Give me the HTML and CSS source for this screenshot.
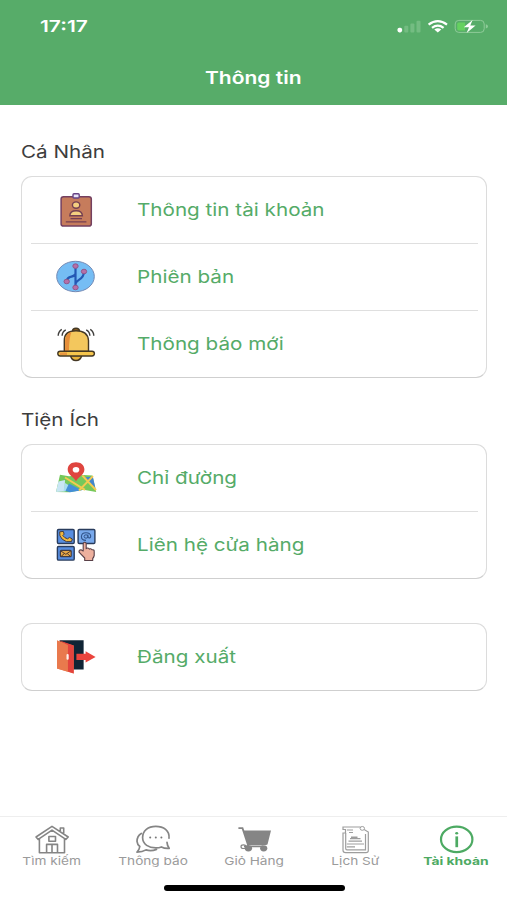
FILE: index.html
```html
<!DOCTYPE html>
<html lang="vi">
<head>
<meta charset="utf-8">
<meta name="viewport" content="width=device-width, initial-scale=1">
<title>Thông tin</title>
<link rel="stylesheet" href="styles.css">
</head>
<body>
<div class="app">
  <header class="header">
    <div class="status">
      <span class="time wide">17:17</span>
      <svg class="status-icons" viewBox="394 14 98 26" width="98" height="26">
        <rect x="397.5" y="27.8" width="4.6" height="4.6" rx="1.8" fill="#fff"/>
        <g fill="#74bc82"><rect x="404.3" y="25.8" width="4" height="6.6" rx="1"/><rect x="410.4" y="23.4" width="4" height="9" rx="1"/><rect x="416.5" y="20.8" width="4" height="11.6" rx="1"/></g>
        <g fill="none" stroke="#fff" stroke-width="2.3"><path d="M428.6 24.6Q437.8 17.6 447 24.6"/><path d="M432 27.8Q437.8 23.4 443.6 27.8"/></g>
        <path d="M434.3 29.5Q437.8 27 441.3 29.5L437.8 32.6Z" fill="#fff"/>
        <rect x="455.2" y="20.4" width="29" height="12" rx="3.6" fill="none" stroke="#8fcb99"/>
        <path d="M458.8 22.4H465V30.6H458.8Q457.2 30.6 457.2 28.8V24.2Q457.2 22.4 458.8 22.4Z" fill="#65d15f"/>
        <path d="M485.8 24.2Q488 24.8 488 26.4T485.8 28.6Z" fill="#8fcb99"/>
        <path d="M472.6 20L463.8 27.2H469L466.6 33L475.6 25.4H470.3Z" fill="#fff"/>
      </svg>
    </div>
    <h1 class="title"><span class="wide">Thông tin</span></h1>
  </header>

  <main class="content">
    <h2 class="heading"><span class="wide">Cá Nhân</span></h2>
    <section class="card">
      <div class="row">
        <svg class="icon" viewBox="54 190 44 40">
          <rect x="61.1" y="196.7" width="30.2" height="29.4" rx="2.4" fill="#c67c5c" stroke="#744060" stroke-width="1.5"/>
          <rect x="73" y="193.8" width="6.2" height="4.2" rx="1" fill="#e9e4f8" stroke="#674384" stroke-width="1.4"/>
          <g fill="#f4cf80" stroke="#744052" stroke-width="1.4"><ellipse cx="76.1" cy="205.1" rx="3.7" ry="3.2"/><path d="M69.8 215.7Q70 210.7 76.1 210.7T82.4 215.7Z"/></g>
          <path d="M70.5 218.6H82M65.8 221.9H86.4" stroke="#743e52" stroke-width="1.3"/>
        </svg>
        <span class="label wide">Thông tin tài khoản</span>
      </div>
      <div class="row">
        <svg class="icon" viewBox="54 256.5 44 40">
          <ellipse cx="75.5" cy="276" rx="18.8" ry="15.2" fill="#75bdf4" stroke="#748ab5" stroke-width="1"/>
          <path d="M75.5 266V287M75.5 283.4C76 278.5 84 280 84 271M75.5 273.5C74 277.5 67 274.5 66.7 280.8" fill="none" stroke="#2458b4" stroke-width="2.2"/>
          <g fill="#b56fa8" stroke="#8b5487" stroke-width=".9"><ellipse cx="75.5" cy="265.6" rx="2.7" ry="2.3"/><ellipse cx="84" cy="271" rx="2.7" ry="2.3"/><ellipse cx="66.7" cy="281" rx="2.7" ry="2.3"/><ellipse cx="75.5" cy="287" rx="2.7" ry="2.3"/></g>
        </svg>
        <span class="label wide">Phiên bản</span>
      </div>
      <div class="row">
        <svg class="icon" viewBox="54 323.5 44 40">
          <g stroke="#443824" stroke-width="1.4" stroke-linejoin="round"><path d="M70.5 355Q71.5 360 76 360T81.8 355Z" fill="#e8b33b"/><path d="M72.4 331Q72.5 327.7 76 327.7T79.6 331Z" fill="#8e5d20"/><path d="M64.3 351V340Q64.3 330.3 76 330.3T88.5 340V351Z" fill="#f3c75d"/></g>
          <path d="M65.1 350.4V340Q65.1 333 71.5 331.5Q69 337 69 350.4Z" fill="#e68e39"/>
          <rect x="57.8" y="350.7" width="36.6" height="4.8" rx="2.4" fill="#f6c64d" stroke="#443824" stroke-width="1.4"/>
          <path d="M60 352H67V354.5H60Z" fill="#e89742"/>
          <path d="M65.8 329.3Q62.4 331 62.1 335.2M61.8 328.8Q58.3 331 58.2 335.2M86.2 329.3Q89.6 331 89.9 335.2M90.2 328.8Q93.7 331 93.8 335.2" fill="none" stroke="#403f3d" stroke-width="1.4"/>
        </svg>
        <span class="label wide">Thông báo mới</span>
      </div>
    </section>

    <h2 class="heading utility"><span class="wide">Tiện Ích</span></h2>
    <section class="card">
      <div class="row">
        <svg class="icon" viewBox="54 457.5 44 40">
          <path d="M60 474.2L69 475.7L83 474.6L92.4 475L96.2 491.6L83.5 489.3L69.3 491.8L56 491.6Z" fill="#75c85b"/>
          <path d="M58.4 481L65 479.5L64.5 491L56 491.6Z" fill="#c9e6f5"/>
          <path d="M65 482.5L69 485L66 490.8L63.5 491Z" fill="#a8dcf1"/>
          <path d="M69 483L82 489.8L70 491.8L65.5 490.5Z" fill="#438fd8"/>
          <path d="M84.5 477L92.8 476L95.4 487.5Z" fill="#4386ce"/>
          <path d="M65 477L85 489.4M79 490L93 475.6M82.3 475L96 489.5" fill="none" stroke="#f4ca51" stroke-width="1.9"/>
          <path d="M76 480.7C73 476 67.7 474.1 67.7 469C67.7 464.6 71.2 461.8 76 461.8S84.4 464.6 84.4 469C84.4 474.1 79 476 76 480.7Z" fill="#df453f"/>
          <ellipse cx="76" cy="469.3" rx="3.3" ry="2.8" fill="#fff"/>
        </svg>
        <span class="label wide">Chỉ đường</span>
      </div>
      <div class="row">
        <svg class="icon" viewBox="54 524.5 44 40">
          <g fill="#578de0" stroke="#293c5d" stroke-width="1.4"><rect x="57.4" y="529" width="16.8" height="14" rx="1.2"/><rect x="78.1" y="529" width="16.8" height="14" rx="1.2" fill="#78a9ec"/><rect x="57.4" y="546" width="16.8" height="13.6" rx="1.2"/></g>
          <path d="M59.7 531.3L63.4 530.9L64.1 533.7L62.8 535Q64.7 537.7 67.5 538.3L69.5 536.9L72.3 538.5L71.5 541.1Q66 542.4 62.2 538.7Q58.9 535.5 59.7 531.3Z" fill="#f1b83e" stroke="#433c41" stroke-width="1"/>
          <rect x="60.4" y="549.8" width="10.8" height="6.4" rx="1" fill="#e7a847" stroke="#433c41" stroke-width="1.2"/>
          <path d="M60.6 550.3L65.8 553.8L71 550.3M61 556L64.4 553M70.6 556L67.2 553" fill="none" stroke="#503b30" stroke-width="1"/>
          <ellipse cx="86" cy="536" rx="1.9" ry="1.7" fill="none" stroke="#31548b"/>
          <path d="M87.9 534V537Q90.7 538.2 90.7 535.5Q90.4 532.2 86 532.2T81.4 536Q81.4 539.8 86 539.9" fill="none" stroke="#31548b" stroke-width="1.1"/>
          <path d="M83.2 550.5V542.8Q84.7 540.8 86.2 542.8V548.2Q88 546.7 89.4 548.6Q90.8 547.6 92 549.3Q94.4 548.7 94.2 551.2V555Q93.7 557 92.7 558V560H84.7V557.5L79 551.7Q78.8 549.5 81 549.3Z" fill="#edb09e" stroke="#594048" stroke-width="1.1" stroke-linejoin="round"/>
        </svg>
        <span class="label wide">Liên hệ cửa hàng</span>
      </div>
    </section>

    <section class="card logout">
      <div class="row">
        <svg class="icon" viewBox="54 637 44 40">
          <path d="M59.5 640.2H83.6V669.6H67Z" fill="#102435"/>
          <path d="M57 640.5L73.7 645.6V673.5L57 668.4Z" fill="#e9794d"/>
          <path d="M59 640.3L73.7 645.6V673.5L67.8 671.6V645.4Z" fill="#e3433d"/>
          <path d="M57 640.5L67.8 645V671.7L57 668.4Z" fill="#e9794d"/>
          <rect x="66.5" y="653.9" width="2.2" height="5.8" rx="1" fill="#fff0e8"/>
          <path d="M76.4 653.7H85.6V651.2L95.6 657L85.6 662.5V660H76.4Z" fill="#eb443d"/>
        </svg>
        <span class="label wide">Đăng xuất</span>
      </div>
    </section>
  </main>

  <nav class="tabs">
    <a class="tab">
      <svg class="tab-icon" viewBox="32 824 40 30">
        <g fill="none" stroke="#858585" stroke-width="1.6" stroke-linejoin="round"><path d="M39.4 838.8V852.8H64.5V838.8M36 837L52 826.3L68.2 837L65.8 839.4L52 830.1L38.2 839.4ZM60.3 831V828H63.7V834"/><rect x="48.9" y="836.5" width="6.6" height="4.8"/><path d="M46.6 852.5V844.4H57.5V852.5M52 844.8V852.5"/></g>
      </svg><span class="wide">Tìm kiếm</span>
    </a>
    <a class="tab chat">
      <svg class="tab-icon" viewBox="133 824 40 30">
        <g fill="none" stroke="#858585" stroke-width="1.7" stroke-linejoin="round" stroke-linecap="round"><path d="M169 838.2C169.8 830.5 163.5 826.3 155.8 826.3S142.6 830.5 142.6 837.6S149 847.9 155.8 847.9Q159.2 847.9 161.4 846.9Q164.8 848.7 169.2 848.3Q167.2 845.8 167 842.4"/><path d="M141.3 833.4Q137 836 137 841.3Q137.3 844.5 139.8 846.5Q139.3 850 137 852.2Q142.5 852.2 146 849.9Q151 851.6 156.5 849.4"/></g>
        <g fill="#777"><circle cx="150.2" cy="837.4" r="1"/><circle cx="155.8" cy="837.4" r="1"/><circle cx="161.4" cy="837.4" r="1"/></g>
      </svg><span class="wide">Thông báo</span>
    </a>
    <a class="tab cart">
      <svg class="tab-icon" viewBox="234 824 40 30">
        <path d="M238.4 828.2H242.5L248.2 845.5M248.6 844H266.7M244 846.4H263" fill="none" stroke="#858585" stroke-width="1.8"/>
        <path d="M243.5 830.4H271L267.5 844.4H248Z" fill="#858585"/>
        <ellipse cx="248.4" cy="848.3" rx="3.7" ry="3.1" fill="#858585"/><ellipse cx="263.7" cy="848.3" rx="3.6" ry="3.1" fill="#858585"/><ellipse cx="243.4" cy="846.7" rx="2.4" ry="1.8" fill="none" stroke="#858585" stroke-width="1.2"/>
      </svg><span class="wide">Giỏ Hàng</span>
    </a>
    <a class="tab history">
      <svg class="tab-icon" viewBox="335 824 40 30">
        <g fill="none" stroke="#9d9d9d" stroke-width="1.2"><path d="M343 827H360L368.3 832V850.5Q368.3 852.7 366 852.7H345.5Q343 852.7 343 850.3V833H345.5V829.5H343Z"/><path d="M365.5 834V849.8H347Q345.7 849.8 345.7 848.5V833"/><path d="M347 830H353M349 832.5H353M350 838.6H360.5M348.5 841.2H362M346.8 844H364M346.8 846.8H355"/></g>
        <ellipse cx="362.3" cy="828.4" rx="2.2" ry="1.9" fill="#fff" stroke="#9d9d9d"/><path d="M351 836.5H357.5V838.5H351Z" fill="#9d9d9d"/>
      </svg><span class="wide">Lịch Sử</span>
    </a>
    <a class="tab active">
      <svg class="tab-icon" viewBox="436 824 40 30">
        <ellipse cx="456.7" cy="839.4" rx="15.7" ry="12.7" fill="none" stroke="#4daa63" stroke-width="2.2"/>
        <ellipse cx="456.7" cy="833.2" rx="1.5" ry="1.2" fill="#4daa63"/><rect x="455.4" y="836.4" width="2.7" height="10.8" fill="#4daa63"/>
      </svg><span class="wide">Tài khoản</span>
    </a>
  </nav>
  <div class="home-indicator"></div>
</div>
</body>
</html>
```
FILE: styles.css
```css
* { box-sizing: border-box; }
body { margin: 0; background: #fff; font-family: Inter, "Noto Sans", sans-serif; }
.app { width: 507px; height: 900px; display: flex; flex-direction: column; overflow: hidden; }
.wide { display: inline-block; white-space: nowrap; transform: scaleX(1.18); }
.header { height: 105px; flex: none; background: #57ac69; color: #fff; }
.status { height: 53px; padding: 14px 15px 0 40px; display: flex; justify-content: space-between; align-items: flex-start; }
.time { font-size: 16.5px; line-height: 25px; font-weight: 600; transform: scaleX(1.27); transform-origin: left; }
.title { margin: 0; text-align: center; font-size: 17.5px; line-height: 49px; font-weight: 600; }
.title .wide { transform: scaleX(1.2); }
.content { flex: 1; padding: 35px 20px 0 21px; }
.heading { margin: 0; height: 36px; font-size: 17.5px; line-height: 24px; font-weight: 400; color: #3d3d3d; }
.heading .wide { transform-origin: left; }
.utility { margin-top: 30px; }
.card { border: 1px solid #dcdcdc; border-bottom-color: #cfcfcf; border-radius: 11px; padding: 0 8px 0 9px; }
.row { height: 67px; display: flex; align-items: center; }
.row:first-child { height: 66px; }
.row + .row { border-top: 1px solid #dfdfdf; }
.icon { width: 44px; height: 40px; margin-left: 23px; flex: none; }
.label { margin-left: 39px; font-size: 17.5px; line-height: 26px; color: #55ab68; transform-origin: left; }
.logout { margin-top: 44px; }
.tabs { height: 68px; flex: none; border-top: 1px solid #eee; display: grid; grid-template-columns: repeat(5, 101px); padding: 7px 0 0 1.5px; }
.tab { display: flex; flex-direction: column; align-items: center; font-size: 11px; line-height: 14px; color: #9b9b9b; }
.tab .wide { transform: scaleX(1.24); }
.tab-icon { width: 40px; height: 30px; flex: none; }
.active { color: #4daa63; font-weight: 700; }
.active .wide { transform: scaleX(1.26); }
.home-indicator { flex: none; width: 181px; height: 6px; margin: 1px 0 9px 164px; border-radius: 3px; background: #000; }
```
